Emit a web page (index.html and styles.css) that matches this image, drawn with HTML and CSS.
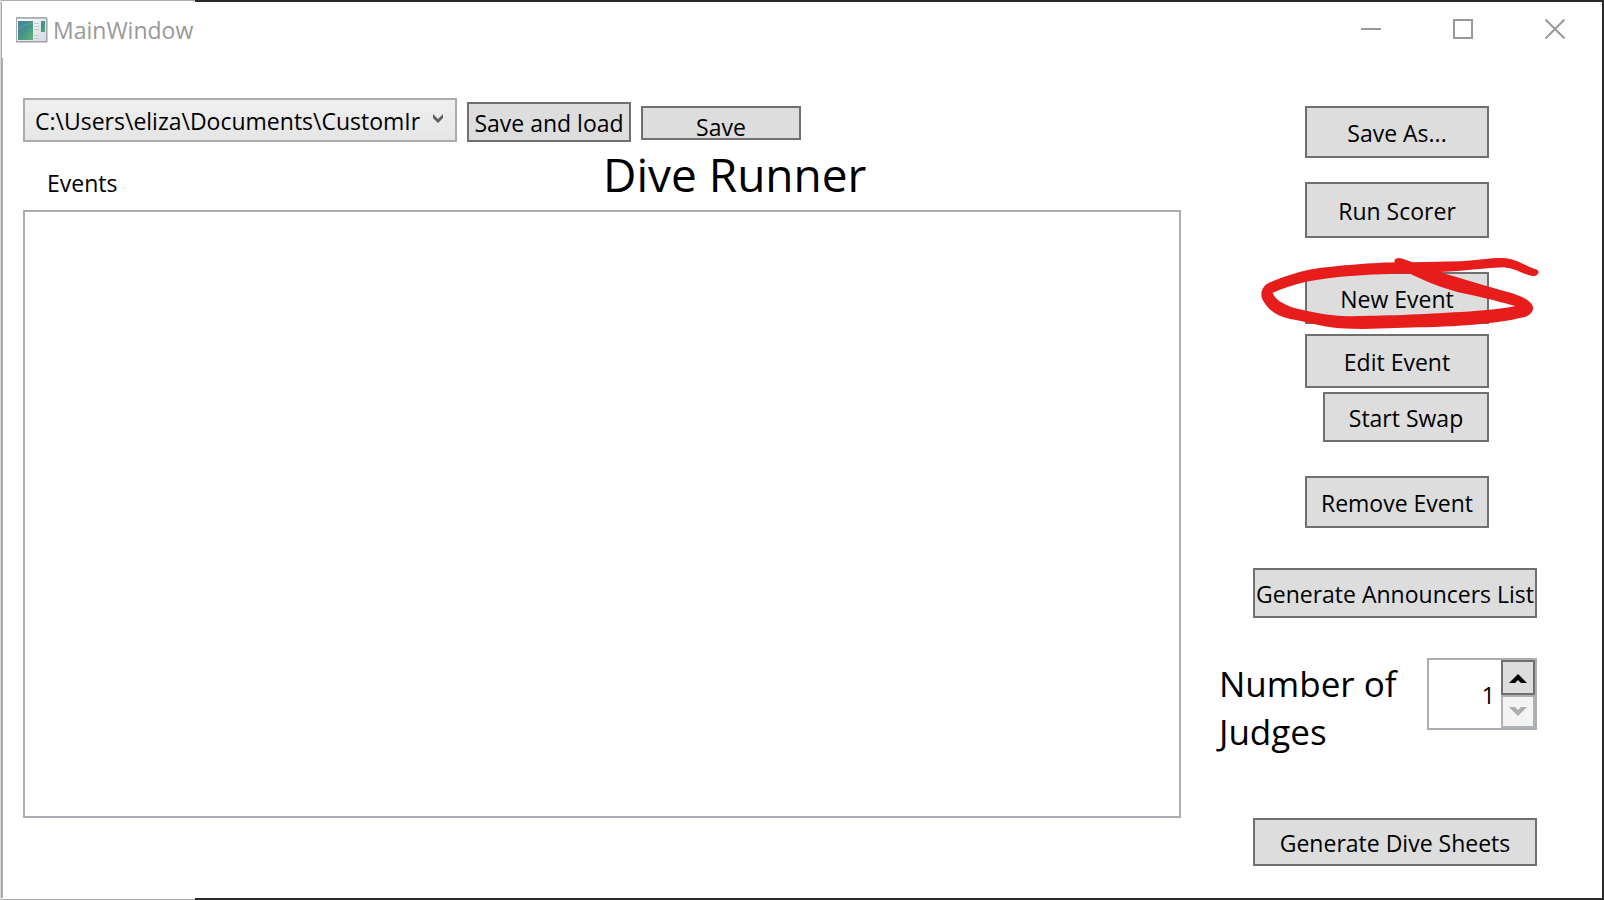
FILE: index.html
```html
<!DOCTYPE html>
<html lang="en">
<head>
<meta charset="utf-8">
<title>MainWindow</title>
<link rel="stylesheet" href="styles.css">
</head>
<body>
<div class="window">
  <header class="titlebar">
    <svg class="app-icon" width="32" height="26" viewBox="0 0 32 26" aria-hidden="true">
      <defs>
        <linearGradient id="pane" x1="0" y1="0" x2="1" y2="1"><stop offset="0" stop-color="#4c82a8"/><stop offset=".5" stop-color="#459288"/><stop offset="1" stop-color="#5fb573"/></linearGradient>
        <linearGradient id="shell" x1="0" y1="0" x2="1" y2="1"><stop offset="0" stop-color="#fff"/><stop offset="1" stop-color="#d5d9df"/></linearGradient>
      </defs>
      <rect x=".5" y=".5" width="30" height="24" fill="url(#shell)" stroke="#a9adb3"/>
      <path d="M0 25h31V1" fill="none" stroke="#999da3"/>
      <path d="M1 1.500h29" stroke="#b7bcc4"/>
      <rect x="2" y="4" width="15" height="19" fill="url(#pane)"/>
      <path d="M2 12Q8 7 17 6" fill="none" stroke="#74b5ae" opacity=".5"/>
      <path d="M18 6.500h5M18 9.500h5M18 12.500h5M18 18.500h5M18 21.500h5" stroke="#c3c6cb"/>
      <rect x="25" y="4" width="4" height="11" fill="url(#pane)"/>
    </svg>
    <span class="caption">MainWindow</span>
    <div class="window-buttons">
      <button type="button" aria-label="Minimize"><svg width="20" height="20" viewBox="0 0 20 20"><path d="M0 10h20"/></svg></button>
      <button type="button" aria-label="Maximize"><svg width="20" height="20" viewBox="0 0 20 20"><path d="M1 1h18v18H1z"/></svg></button>
      <button type="button" aria-label="Close"><svg width="20" height="20" viewBox="0 0 20 20"><path d="M.5 .5l19 19M19.500 .5l-19 19"/></svg></button>
    </div>
  </header>

  <div class="content">
    <main class="events-panel">
      <div class="toolbar">
        <div class="combo">
          <select aria-label="Events file"><option>C:\Users\eliza\Documents\CustomIr</option></select>
          <svg class="combo-arrow" width="10" height="10" viewBox="0 0 10 10" aria-hidden="true"><path d="M0 0L5 5L10 0V4L5 9L0 4Z"/></svg>
        </div>
        <button type="button" class="btn save-load">Save and load</button>
        <button type="button" class="btn save">Save</button>
      </div>
      <div class="heading-row">
        <span class="list-label" id="events-label">Events</span>
        <h1>Dive Runner</h1>
      </div>
      <div class="event-list" role="listbox" aria-labelledby="events-label" tabindex="0"></div>
    </main>

    <aside class="actions">
      <button type="button" class="btn action save-as">Save As...</button>
      <button type="button" class="btn action tall">Run Scorer</button>
      <div class="marked">
        <button type="button" class="btn action">New Event</button>
        <svg class="marker" width="280" height="72" viewBox="60 51 840 216" aria-hidden="true">
          <path fill="#e71d1c" fill-rule="evenodd" d="M885 87C850 75 830 55 785 54C740 54 700 62 660 64L520 67C500 62 490 55 475 54C460 56 462 66 466 67C380 69 270 79 215 88C160 99 105 119 80 132C62 145 60 168 70 183C85 210 110 228 150 237C200 245 240 260 300 265C400 270 480 262 560 262C700 258 800 245 850 232C875 225 882 210 878 198C870 180 840 165 800 155C730 135 660 115 600 96C680 93 720 85 790 82C830 85 850 105 880 108C898 108 902 90 885 87ZM98 158C130 145 160 135 195 126C280 108 400 101 510 101C560 125 620 150 680 162C740 175 790 188 826 198C780 208 700 214 640 217C530 225 400 228 320 229C250 225 200 212 160 203C125 190 105 178 98 158Z"/>
        </svg>
      </div>
      <button type="button" class="btn action edit">Edit Event</button>
      <button type="button" class="btn action swap">Start Swap</button>
      <button type="button" class="btn action remove">Remove Event</button>
      <button type="button" class="btn wide announcers">Generate Announcers List</button>
      <div class="judges">
        <label for="judges">Number of Judges</label>
        <div class="spinner">
          <input id="judges" type="text" inputmode="numeric" value="1">
          <div class="spinner-buttons">
            <button type="button" aria-label="Increase"><svg width="18" height="10" viewBox="0 0 18 10"><path d="M0 9L9 0L18 9H12L9 6L6 9Z"/></svg></button>
            <button type="button" aria-label="Decrease" disabled><svg width="18" height="10" viewBox="0 0 18 10"><path d="M0 0L9 9L18 0H12L9 3L6 0Z"/></svg></button>
          </div>
        </div>
      </div>
      <button type="button" class="btn wide sheets">Generate Dive Sheets</button>
    </aside>
  </div>
</div>
</body>
</html>
```
FILE: styles.css
```css
* { box-sizing: border-box; }

body {
  margin: 0;
  min-height: 100vh;
  display: flex;
  padding: 2px 2px 2px 1px;
  background:
    linear-gradient(#d8d8d8, #d8d8d8) 0 0 / 1px 100% no-repeat,
    linear-gradient(#aaa, #aaa) 1px 0 / 194px 1px no-repeat,
    linear-gradient(#aaa, #aaa) 1px 100% / 194px 1px no-repeat,
    linear-gradient(90deg, #fff 195px, #2b2a2b 195px);
  color: #000;
  font-family: "Open Sans", "Noto Sans", sans-serif;
  font-size: 23px;
}

button, input, select { font: inherit; color: inherit; }

.window {
  flex: 1;
  display: flex;
  flex-direction: column;
  background: #fff;
}

.titlebar {
  display: flex;
  align-items: center;
  height: 56px;
  padding-left: 14px;
  border-left: 1px solid #aaa;
  color: #999;
}

.app-icon { flex: none; }

.caption { margin-left: 5px; line-height: 56px; }

.window-buttons { display: flex; margin-left: auto; padding-right: 1px; }

.window-buttons button {
  width: 92px;
  height: 56px;
  padding: 0 0 2px;
  border: 0;
  background: none;
}

.window-buttons svg { display: block; margin: 0 auto; fill: none; stroke: #999; stroke-width: 2; }

.content { flex: 1; display: flex; padding: 40px 65px 32px 20px; border-left: 2px solid #aaa; }

.events-panel { flex: 1; display: flex; flex-direction: column; margin-bottom: 48px; }

.toolbar { display: flex; align-items: flex-start; gap: 10px; height: 44px; }

.combo { position: relative; width: 434px; }

.combo select {
  appearance: none;
  display: block;
  width: 100%;
  height: 44px;
  padding: 2px 32px 0 10px;
  border: 2px solid #acacac;
  border-radius: 0;
  background: linear-gradient(#f0f0f0, #e5e5e5);
}

.combo-arrow { position: absolute; top: 16px; right: 14px; fill: #606060; pointer-events: none; }

.btn {
  padding: 2px 0 0;
  border: 2px solid #707070;
  border-radius: 0;
  background: #ddd;
  line-height: 28px;
  white-space: nowrap;
}

.save-load { width: 164px; height: 40px; margin-top: 4px; }

.save { width: 160px; height: 34px; margin-top: 8px; padding-top: 8px; line-height: 22px; }

.heading-row { display: flex; align-items: baseline; height: 68px; }

.list-label { width: 580px; padding-left: 24px; }

h1 { margin: 0; font-size: 46px; font-weight: 400; line-height: 64px; }

.event-list { flex: 1; border: 2px solid #abadb3; }

.actions {
  display: flex;
  flex-direction: column;
  align-items: flex-end;
  width: 356px;
  padding-top: 8px;
}

.action { width: 184px; height: 52px; margin-right: 48px; }

.tall { height: 56px; margin-top: 24px; }

.marked { position: relative; margin-top: 34px; height: 52px; }

.marker { position: absolute; left: -45px; top: -15px; pointer-events: none; }

.edit { height: 54px; margin-top: 10px; }

.swap { width: 166px; height: 50px; margin-top: 4px; }

.remove { margin-top: 34px; }

.wide { width: 284px; }

.announcers { height: 50px; margin-top: 40px; }

.sheets { height: 48px; margin-top: auto; }

.judges { display: flex; justify-content: space-between; width: 318px; margin-top: 40px; }

.judges label { width: 190px; padding-top: 2px; font-size: 35px; line-height: 48px; }

.spinner { display: flex; width: 110px; height: 72px; border: 2px solid #abadb3; }

.spinner input {
  flex: 1;
  min-width: 0;
  padding: 2px 6px 0 0;
  border: 0;
  background: #fff;
  text-align: right;
}

.spinner-buttons { display: flex; flex-direction: column; width: 34px; }

.spinner-buttons button {
  flex: 1;
  padding: 2px 0 0;
  border: 2px solid #707070;
  background: #ddd;
}

.spinner-buttons svg { display: block; margin: 0 auto; }

.spinner-buttons button:disabled { padding: 0; border-color: #adb2b5; background: #f4f4f4; fill: #adadad; }
```
